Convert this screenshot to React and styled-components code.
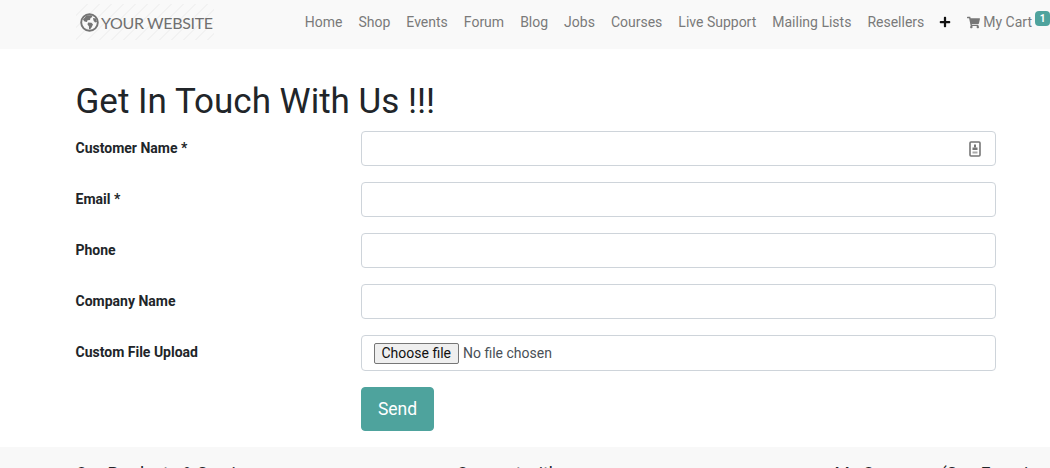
import React from "react";
import styled, { createGlobalStyle } from "styled-components";
import { FaShoppingCart, FaPlus } from "react-icons/fa";

const GlobalStyle = createGlobalStyle`
  html, body {
    margin: 0;
    height: 468px;
    overflow: hidden;
    background: #fff;
    font-family: Roboto, "Liberation Sans", sans-serif;
    font-size: 14px;
    color: #212529;
  }
  * { box-sizing: border-box; }
`;

const Navbar = styled.nav`
  height: 49px;
  background: #f9f9f9;
  display: flex;
  align-items: flex-start;
  justify-content: space-between;
  padding: 4px 0 0 76px;
`;

const Logo = styled.a`
  width: 138px;
  height: 36px;
  padding: 1px 0 0 4px;
  display: flex;
  align-items: center;
  gap: 2px;
  color: #707070;
  font-family: Lato, sans-serif;
  font-size: 16px;
  letter-spacing: -0.35px;
  white-space: nowrap;
  background: repeating-linear-gradient(135deg, #f9f9f9 0 7.5px, #f2f2f2 7.5px 8.5px);
`;

const NavList = styled.ul`
  display: flex;
  align-items: center;
  gap: 16px;
  height: 36px;
  list-style: none;
  margin: 0;
  padding: 0;
`;

const NavItem = styled.li`
  display: flex;
  align-items: center;
  gap: 3px;
  margin-left: ${(props) => (props.$dark ? "-1px" : "0")};
  color: #7a7a7a;
  font-size: 14px;
  line-height: 21px;
  white-space: nowrap;
  svg { color: ${(props) => (props.$dark ? "#111" : "#777")}; }
`;

const CartBadge = styled.span`
  width: 15px;
  height: 15px;
  margin: -8px 0 0 0;
  border-radius: 4px;
  background: #4ea39d;
  color: #fff;
  font-size: 10px;
  font-weight: 700;
  line-height: 15px;
  text-align: center;
`;

const Main = styled.main`
  padding: 30px 0 16px 75.5px;
`;

const Title = styled.h1`
  margin: 0 0 7px;
  font-size: 35px;
  font-weight: 400;
  line-height: 45px;
`;

const Row = styled.div`
  display: grid;
  grid-template-columns: 285.5px 635px;
  margin-bottom: 16px;
`;

const Label = styled.label`
  padding-top: 7px;
  font-weight: 700;
  line-height: 21px;
  color: #212529;
`;

const Field = styled.div`
  position: relative;
  height: ${(props) => (props.$tall ? "36px" : "35px")};
  border: 1px solid #ced4da;
  border-radius: 4px;
  background: #fff;
  display: flex;
  align-items: center;
  padding-left: 12px;
  color: #495057;
`;

const TextInput = styled.input`
  width: 100%;
  height: 100%;
  border: 0;
  outline: 0;
  background: transparent;
`;

const FileButton = styled.span`
  height: 21px;
  padding: 0 6.5px;
  margin-right: 4.5px;
  border: 1px solid #767676;
  border-radius: 2px;
  background: #efefef;
  color: #111;
  font-size: 14px;
  line-height: 19px;
`;

const ContactIcon = styled.svg`
  position: absolute;
  right: 14px;
  top: 9px;
  width: 12px;
  height: 16px;
`;

const SendRow = styled.div`
  padding-left: 285.5px;
`;

const SendButton = styled.button`
  width: 73px;
  height: 44px;
  border: 1px solid #4ea39d;
  border-radius: 4px;
  background: #4ea39d;
  color: #fff;
  font-family: inherit;
  font-size: 17.5px;
`;

const Footer = styled.footer`
  height: 21px;
  background: #f8f8f8;
  padding: 17px 0 0 75.5px;
  display: grid;
  grid-template-columns: 381px 378px auto;
  overflow: hidden;
`;

const FooterTitle = styled.h5`
  margin: 0;
  font-size: 17.5px;
  font-weight: 400;
  line-height: 21px;
  color: #212529;
  white-space: nowrap;
`;

const navLinks = ["Home", "Shop", "Events", "Forum", "Blog", "Jobs", "Courses", "Live Support", "Mailing Lists", "Resellers"];
const fields = ["Email *", "Phone", "Company Name"];

const GlobeIcon = () => (
  <svg width="19" height="19" viewBox="0 0 19 19" aria-hidden="true">
    <circle cx="9.5" cy="9.5" r="8.3" fill="none" stroke="#747474" strokeWidth="1.9" />
    <path
      d="M6.5 2.5 L11.5 2.2 L12.5 4 L10.5 5 L10 7 L7.5 7.2 L7 9 L4.5 8.5 L3 6.5 Z M8 9.5 L11.5 9.8 L13 11.5 L11.5 14.5 L10 16.5 L9 16 L9 13.5 L7.5 11.5 Z M13 5 L16 5.5 L17 9 L15 9.5 L13.5 7.5 Z"
      fill="#747474"
    />
  </svg>
);

export default function App() {
  return (
    <>
      <GlobalStyle />
      <Navbar>
        <Logo>
          <GlobeIcon />
          YOUR WEBSITE
        </Logo>
        <NavList>
          {navLinks.map((link) => (
            <NavItem key={link}>{link}</NavItem>
          ))}
          <NavItem $dark>
            <FaPlus size={12} />
          </NavItem>
          <NavItem>
            <FaShoppingCart size={13} />
            My Cart
            <CartBadge>1</CartBadge>
          </NavItem>
        </NavList>
      </Navbar>
      <Main>
        <Title>Get In Touch With Us !!!</Title>
        <Row>
          <Label>Customer Name *</Label>
          <Field>
            <TextInput />
            <ContactIcon viewBox="0 0 12 16">
              <rect x="1" y="1" width="10" height="14" rx="1" fill="none" stroke="#777" strokeWidth="1.6" />
              <rect x="5" y="3.5" width="2" height="3" fill="#777" />
              <rect x="3.5" y="6.5" width="5" height="2.5" fill="#777" />
              <rect x="3.5" y="10.5" width="5" height="2" fill="#aaa" />
            </ContactIcon>
          </Field>
        </Row>
        {fields.map((field) => (
          <Row key={field}>
            <Label>{field}</Label>
            <Field>
              <TextInput />
            </Field>
          </Row>
        ))}
        <Row>
          <Label>Custom File Upload</Label>
          <Field $tall>
            <FileButton>Choose file</FileButton>
            No file chosen
          </Field>
        </Row>
        <SendRow>
          <SendButton>Send</SendButton>
        </SendRow>
      </Main>
      <Footer>
        <FooterTitle>Our Products &amp; Services</FooterTitle>
        <FooterTitle>Connect with us</FooterTitle>
        <FooterTitle>My Company (San Francisco)</FooterTitle>
      </Footer>
    </>
  );
}
